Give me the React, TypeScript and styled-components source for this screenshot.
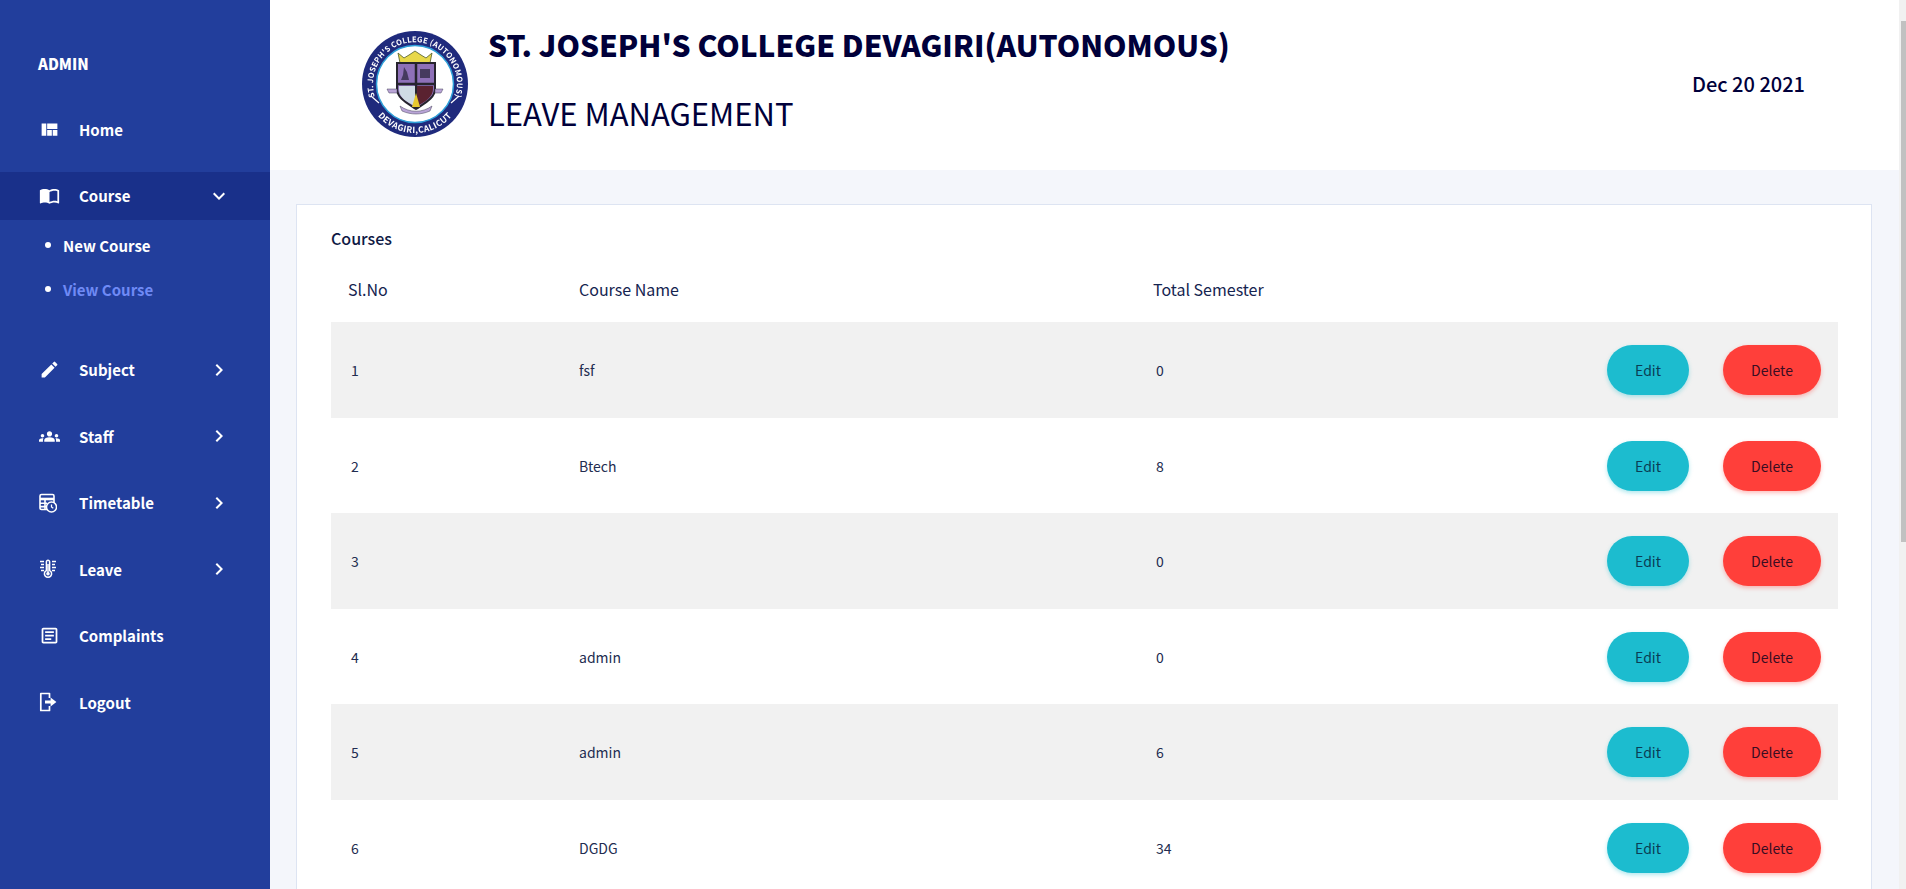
import React from "react";
import styled, { createGlobalStyle } from "styled-components";
import { MdEdit, MdGroups, MdImportContacts, MdKeyboardArrowRight, MdKeyboardArrowDown, MdOutlineArticle, MdViewQuilt } from "react-icons/md";

const GlobalStyle = createGlobalStyle`
  html, body {
    margin: 0;
    padding: 0;
    background: #f4f6fb;
  }
  body {
    font-family: "Noto Sans CJK SC", "Noto Sans", sans-serif;
    color: #0f1a45;
  }
  * { box-sizing: border-box; }
  ::-webkit-scrollbar { display: none; }
`;

const Shell = styled.div`
  display: flex;
  min-height: 1445px;
  padding-right: 7px;
`;

// the page's scrollbar as it looks in the picture, it lies over the page edge
const ScrollTrack = styled.div`
  position: fixed;
  top: 0;
  right: 0;
  width: 7px;
  height: 889px;
  padding: 21px 0 0 2px;
  background: #f1f1f1;
`;

const ScrollThumb = styled.div`
  height: 521px;
  background: #c1c1c1;
`;

const Sidebar = styled.aside`
  width: 270px;
  flex-shrink: 0;
  background: #223e9c;
  color: #fff;
  padding-top: 52px;
`;

const Brand = styled.div`
  padding-left: 38px;
  font-size: 15px;
  line-height: 24px;
  font-weight: 900;
  margin-bottom: 29px;
`;

const Nav = styled.nav`
  display: flex;
  flex-direction: column;
  gap: 18.5px;
`;

const NavItem = styled.div<{ $active?: boolean }>`
  display: flex;
  align-items: center;
  height: 48px;
  padding-left: 39px;
  font-size: 15px;
  font-weight: 700;
  background: ${(p) => (p.$active ? "#19308a" : "transparent")};
`;

const IconSlot = styled.span`
  display: flex;
  align-items: center;
  width: 40px;
  font-size: 21px;
`;

const NavLabel = styled.span`
  flex: 1;
`;

const Chevron = styled.span`
  display: flex;
  width: 24px;
  margin-right: 39px;
  font-size: 24px;
`;

const SubMenu = styled.ul`
  list-style: none;
  margin: -15px 0 16px;
  padding: 0 0 0 45px;
`;

const SubItem = styled.li<{ $current?: boolean }>`
  display: flex;
  align-items: center;
  gap: 12px;
  height: 44px;
  font-size: 15px;
  font-weight: 700;
  color: ${(p) => (p.$current ? "#6f8af5" : "#fff")};
  &::before {
    content: "";
    width: 6px;
    height: 6px;
    border-radius: 50%;
    background: #fff;
  }
`;

const Main = styled.main`
  flex: 1;
  min-width: 0;
`;

const TopBar = styled.header`
  display: flex;
  align-items: center;
  height: 170px;
  background: #fff;
  padding: 0 94px 3px 90px;
`;

const Logo = styled.svg`
  width: 110px;
  height: 110px;
  flex-shrink: 0;
  margin-right: 18px;
  filter: blur(0.4px);
`;

const Titles = styled.div`
  flex: 1;
  padding-bottom: 10px;
`;

const CollegeName = styled.h1`
  margin: 0 0 29px;
  font-size: 29.9px;
  line-height: 40px;
  font-weight: 900;
  color: #00003a;
`;

const AppName = styled.h2`
  margin: 0;
  font-size: 31px;
  line-height: 40px;
  font-weight: 400;
  color: #00003a;
`;

const DateLabel = styled.div`
  font-size: 20px;
  font-weight: 500;
  color: #00003a;
`;

const Content = styled.div`
  padding: 34px 27px 0 26px;
`;

const Card = styled.section`
  background: #fff;
  border: 1px solid #dde4f2;
  padding: 21px 33px 0 34px;
  min-height: 1210px;
`;

const CardTitle = styled.div`
  font-size: 16px;
  line-height: 24px;
  font-weight: 500;
  color: #0f1a45;
  margin-bottom: 7px;
`;

const Table = styled.table`
  width: 100%;
  border-collapse: collapse;
  table-layout: fixed;
`;

const HeadCell = styled.th`
  height: 65px;
  padding: 0 17px 1px;
  text-align: left;
  font-size: 16px;
  font-weight: 400;
  color: #152450;
`;

const Row = styled.tr`
  height: 95px;
  &:nth-child(odd) {
    height: 96px;
    background: #f1f1f1;
  }
`;

const Cell = styled.td<{ $numeric?: boolean }>`
  padding: 0 17px 0 ${(p) => (p.$numeric ? "20px" : "17px")};
  font-size: 14px;
  color: #222c50;
`;

const Actions = styled.div`
  display: flex;
  justify-content: flex-end;
  gap: 34px;
`;

const Pill = styled.button<{ $tone: "edit" | "delete" }>`
  height: 50px;
  width: ${(p) => (p.$tone === "edit" ? "82px" : "98px")};
  border: 0;
  border-radius: 25px;
  font-family: inherit;
  font-size: 14px;
  background: ${(p) => (p.$tone === "edit" ? "#1cbccf" : "#ff3f3a")};
  color: ${(p) => (p.$tone === "edit" ? "#0a3c55" : "#3a0d22")};
  box-shadow: 0 2px 4px ${(p) => (p.$tone === "edit" ? "rgba(28,188,207,.35)" : "rgba(255,63,58,.35)")};
`;

const TimetableIcon = () => (
  <svg width="18" height="20" viewBox="0 0 18 20" fill="none">
    <rect x="1" y="1.5" width="14" height="15" rx="1.5" stroke="#fff" strokeWidth="1.6" />
    <path d="M1 6h14" stroke="#fff" strokeWidth="2.6" />
    <path d="M1 10.2h7M1 13.6h6M6 6v10" stroke="#fff" strokeWidth="1.6" />
    <circle cx="12.5" cy="14" r="5" fill="#223e9c" stroke="#fff" strokeWidth="1.5" />
    <path d="M12.5 11.4V14l1.8 1.2" stroke="#fff" strokeWidth="1.3" />
  </svg>
);

const LeaveIcon = () => (
  <svg width="18" height="20" viewBox="0 0 18 20" fill="none">
    <path d="M9 1.2a1.6 1.6 0 0 1 1.6 1.6v8.7a3.6 3.6 0 1 1-3.2 0V2.8A1.6 1.6 0 0 1 9 1.2z" stroke="#fff" strokeWidth="1.5" />
    <circle cx="9" cy="14.7" r="1.8" fill="#fff" />
    <path d="M9 5v9" stroke="#fff" strokeWidth="1.5" />
    <path d="M1 2.5h4M2 5.5h3M1 8.5h4M2 11.5h3M13 2.5h4M13 5.5h3M13 8.5h4M13 11.5h3" stroke="#fff" strokeWidth="1.5" />
  </svg>
);

const LogoutIcon = () => (
  <svg width="18" height="20" viewBox="0 0 18 20" fill="none">
    <path d="M10.5 6V1.5H1.8v17h8.7V14" stroke="#fff" strokeWidth="1.7" strokeLinejoin="round" />
    <path d="M6 8.6h5.6V5.4L17.4 10l-5.8 4.6v-3.2H6z" fill="#fff" />
  </svg>
);

const CollegeLogo = () => (
  <Logo viewBox="0 0 110 110">
    <defs>
      <path id="arcTop" d="M15.5 69.4A42 42 0 1 1 94.5 69.4" />
      <path id="arcBottom" d="M6 55A49 49 0 0 0 104 55" />
    </defs>
    <circle cx="55" cy="55" r="53" fill="#1f2a7c" />
    <circle cx="55" cy="55" r="38.5" fill="#fff" stroke="#2e9fd8" strokeWidth="1.5" />
    <text fontSize="7.6" fontWeight="700" fill="#fff" letterSpacing="0.25">
      <textPath href="#arcTop" startOffset="50%" textAnchor="middle">ST. JOSEPH'S COLLEGE (AUTONOMOUS)</textPath>
    </text>
    <text fontSize="8.5" fontWeight="700" fill="#fff" letterSpacing="0.4">
      <textPath href="#arcBottom" startOffset="50%" textAnchor="middle">DEVAGIRI,CALICUT</textPath>
    </text>
    <path d="M11 67l8 7M99 67l-8 7" stroke="#fff" strokeWidth="1.2" />
    <path d="M38 24l6 5 5-3 6-4 6 4 5 3 6-5-2 10H40z" fill="#e8d84a" stroke="#4c5a2a" strokeWidth="0.8" />
    <path d="M37 34h38v26c0 9-10 14-19 20-9-6-19-11-19-20z" fill="#8e70b8" stroke="#26242e" strokeWidth="2" />
    <path d="M56 34v46M37 55h38" stroke="#26242e" strokeWidth="2.5" />
    <path d="M39 57h16v20c-8-4-16-8-16-17z" fill="#cfdbe4" />
    <path d="M57 57h16v3c0 8-8 13-16 17z" fill="#5a2230" />
    <path d="M52 78l4-14 4 14z" fill="#e8c92e" />
    <path d="M27 60h10v4h-8zM75 60h8l-2 4h-6z" fill="#b9a4d6" stroke="#44405a" strokeWidth="0.5" />
    <path d="M40 77c10 7 22 7 32 0l-2 5c-9 4-19 4-28 0z" fill="#b9a4d6" stroke="#44405a" strokeWidth="0.5" />
    <path d="M44 38l3 5 2 8h-8l2-5zM60 40h10v9H60z" fill="#2c2840" opacity="0.75" />
  </Logo>
);

const courses = [
  { no: 1, name: "fsf", semesters: 0 },
  { no: 2, name: "Btech", semesters: 8 },
  { no: 3, name: "", semesters: 0 },
  { no: 4, name: "admin", semesters: 0 },
  { no: 5, name: "admin", semesters: 6 },
  { no: 6, name: "DGDG", semesters: 34 },
];

export default function App() {
  return (
    <>
      <GlobalStyle />
      <ScrollTrack>
        <ScrollThumb />
      </ScrollTrack>
      <Shell>
        <Sidebar>
          <Brand>ADMIN</Brand>
          <Nav>
            <NavItem>
              <IconSlot><MdViewQuilt /></IconSlot>
              <NavLabel>Home</NavLabel>
            </NavItem>
            <NavItem $active>
              <IconSlot><MdImportContacts /></IconSlot>
              <NavLabel>Course</NavLabel>
              <Chevron><MdKeyboardArrowDown /></Chevron>
            </NavItem>
            <SubMenu>
              <SubItem>New Course</SubItem>
              <SubItem $current>View Course</SubItem>
            </SubMenu>
            <NavItem>
              <IconSlot><MdEdit /></IconSlot>
              <NavLabel>Subject</NavLabel>
              <Chevron><MdKeyboardArrowRight /></Chevron>
            </NavItem>
            <NavItem>
              <IconSlot><MdGroups /></IconSlot>
              <NavLabel>Staff</NavLabel>
              <Chevron><MdKeyboardArrowRight /></Chevron>
            </NavItem>
            <NavItem>
              <IconSlot><TimetableIcon /></IconSlot>
              <NavLabel>Timetable</NavLabel>
              <Chevron><MdKeyboardArrowRight /></Chevron>
            </NavItem>
            <NavItem>
              <IconSlot><LeaveIcon /></IconSlot>
              <NavLabel>Leave</NavLabel>
              <Chevron><MdKeyboardArrowRight /></Chevron>
            </NavItem>
            <NavItem>
              <IconSlot><MdOutlineArticle /></IconSlot>
              <NavLabel>Complaints</NavLabel>
            </NavItem>
            <NavItem>
              <IconSlot><LogoutIcon /></IconSlot>
              <NavLabel>Logout</NavLabel>
            </NavItem>
          </Nav>
        </Sidebar>
        <Main>
          <TopBar>
            <CollegeLogo />
            <Titles>
              <CollegeName>ST. JOSEPH'S COLLEGE DEVAGIRI(AUTONOMOUS)</CollegeName>
              <AppName>LEAVE MANAGEMENT</AppName>
            </Titles>
            <DateLabel>Dec 20 2021</DateLabel>
          </TopBar>
          <Content>
            <Card>
              <CardTitle>Courses</CardTitle>
              <Table>
                <colgroup>
                  <col style={{ width: 231 }} />
                  <col style={{ width: 574 }} />
                  <col />
                  <col style={{ width: 300 }} />
                </colgroup>
                <thead>
                  <tr>
                    <HeadCell>Sl.No</HeadCell>
                    <HeadCell>Course Name</HeadCell>
                    <HeadCell>Total Semester</HeadCell>
                    <HeadCell />
                  </tr>
                </thead>
                <tbody>
                  {courses.map((c) => (
                    <Row key={c.no}>
                      <Cell $numeric>{c.no}</Cell>
                      <Cell>{c.name}</Cell>
                      <Cell $numeric>{c.semesters}</Cell>
                      <Cell>
                        <Actions>
                          <Pill $tone="edit">Edit</Pill>
                          <Pill $tone="delete">Delete</Pill>
                        </Actions>
                      </Cell>
                    </Row>
                  ))}
                </tbody>
              </Table>
            </Card>
          </Content>
        </Main>
      </Shell>
    </>
  );
}
